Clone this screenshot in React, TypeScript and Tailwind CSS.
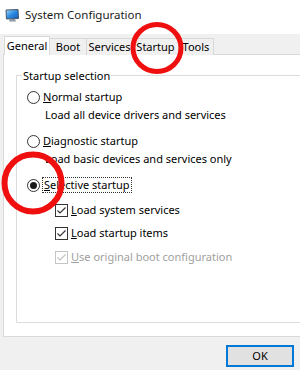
import React from 'react';

const Radio: React.FC<{ checked?: boolean }> = ({ checked }) => (
  <span className="flex h-[13px] w-[13px] shrink-0 items-center justify-center rounded-full border border-[#333333] bg-white">
    {checked && <span className="h-[7px] w-[7px] rounded-full bg-[#1a1a1a]" />}
  </span>
);

const Check: React.FC<{ disabled?: boolean }> = ({ disabled }) => (
  <span
    className={
      'flex h-[13px] w-[13px] shrink-0 items-center justify-center border bg-white ' +
      (disabled ? 'border-[#c4c4c4]' : 'border-[#333333]')
    }
  >
    <svg width="11" height="11" viewBox="0 0 11 11">
      <path
        d="M1.5 5.5 L4 8 L9.5 2.5"
        fill="none"
        stroke={disabled ? '#c4c4c4' : '#333333'}
        strokeWidth="1.2"
      />
    </svg>
  </span>
);

const Tab: React.FC<{ label: string; w: string; active?: boolean }> = ({ label, w, active }) =>
  active ? (
    <div className={`relative z-10 flex h-[19px] items-center justify-center border-x border-t border-[#d9d9d9] bg-white pb-[1px] ${w}`}>
      {label}
    </div>
  ) : (
    <div className={`flex h-[17px] items-center justify-center border-r border-t border-[#d9d9d9] bg-[#f0f0f0] pb-[1px] ${w}`}>
      {label}
    </div>
  );

const App: React.FC = () => {
  return (
    <div className="relative h-[370px] w-[300px] overflow-hidden bg-[#f0f0f0] font-['Noto_Sans',sans-serif] text-[11px] leading-[16px] text-black">
      {/* title bar */}
      <div className="flex h-[34px] items-center bg-white pb-[4px] pl-[5px]">
        <svg width="15" height="13" viewBox="0 0 15 13">
          <defs>
            <linearGradient id="scr" x1="0" y1="0" x2="1" y2="1">
              <stop offset="0" stopColor="#9fdcff" />
              <stop offset="0.5" stopColor="#2b8be0" />
              <stop offset="1" stopColor="#1457b8" />
            </linearGradient>
          </defs>
          <path d="M1 1 L13 0.5 L13.5 9.5 L1.5 10 Z" fill="url(#scr)" stroke="#4a5563" strokeWidth="1" />
          <path d="M5 10 L10 10 L11 12.5 L4 12.5 Z" fill="#8a96a3" />
        </svg>
        <span className="ml-[5px] text-[11.5px] leading-[18px] text-[#1a1a1a]">System Configuration</span>
      </div>

      {/* tabs */}
      <div className="flex h-[21px] items-end pl-[4px]">
        <Tab label="General" w="w-[46px]" active />
        <Tab label="Boot" w="w-[37px]" />
        <Tab label="Services" w="w-[46px]" />
        <Tab label="Startup" w="w-[46px]" />
        <Tab label="Tools" w="w-[35px]" />
      </div>

      {/* tab pane */}
      <div className="-mt-[1px] ml-[3px] h-[283px] w-[310px] border border-[#d9d9d9] bg-white pl-[12px] pt-[20px]">
        <div className="h-[248px] w-[300px] border border-[#dcdcdc]">
          <div className="-mt-[8px] ml-[5px] w-fit bg-white px-[1px]">Startup selection</div>

          <div className="mt-[4px] flex h-[18px] items-center pl-[10px]">
            <Radio />
            <span className="ml-[3px]">
              <span className="underline">N</span>ormal startup
            </span>
          </div>
          <div className="flex h-[18px] items-center pl-[28px]">Load all device drivers and services</div>

          <div className="mt-[8px] flex h-[18px] items-center pl-[10px]">
            <Radio />
            <span className="ml-[3px]">
              <span className="underline">D</span>iagnostic startup
            </span>
          </div>
          <div className="flex h-[18px] items-center pl-[28px]">Load basic devices and services only</div>

          <div className="mt-[8px] flex h-[18px] items-center pl-[10px]">
            <Radio checked />
            <span className="ml-[2px] border border-dotted border-[#333333] px-[1px] leading-[14px]">
              <span className="underline">S</span>elective startup
            </span>
          </div>

          <div className="mt-[7px] flex h-[18px] items-center pl-[38px]">
            <Check />
            <span className="ml-[3px]">
              <span className="underline">L</span>oad system services
            </span>
          </div>
          <div className="mt-[5px] flex h-[18px] items-center pl-[38px]">
            <Check />
            <span className="ml-[3px]">
              <span className="underline">L</span>oad startup items
            </span>
          </div>
          <div className="mt-[6px] flex h-[18px] items-center pl-[38px] text-[#a0a0a0]">
            <Check disabled />
            <span className="ml-[3px]">
              <span className="underline">U</span>se original boot configuration
            </span>
          </div>
        </div>
      </div>

      {/* buttons */}
      <div className="mt-[8px] flex justify-end pr-[6px]">
        <button className="flex h-[22px] w-[68px] items-center justify-center border-2 border-[#0078d7] bg-[#e1e1e1]">
          OK
        </button>
      </div>

      {/* red annotation circles */}
      <svg className="pointer-events-none absolute inset-0" width="300" height="370" viewBox="0 0 300 370">
        <ellipse cx="157" cy="48" rx="24" ry="23.5" fill="none" stroke="#f00f0f" strokeWidth="5" />
        <circle cx="33" cy="183" r="28.5" fill="none" stroke="#f00f0f" strokeWidth="6" />
      </svg>
    </div>
  );
};

export default App;
